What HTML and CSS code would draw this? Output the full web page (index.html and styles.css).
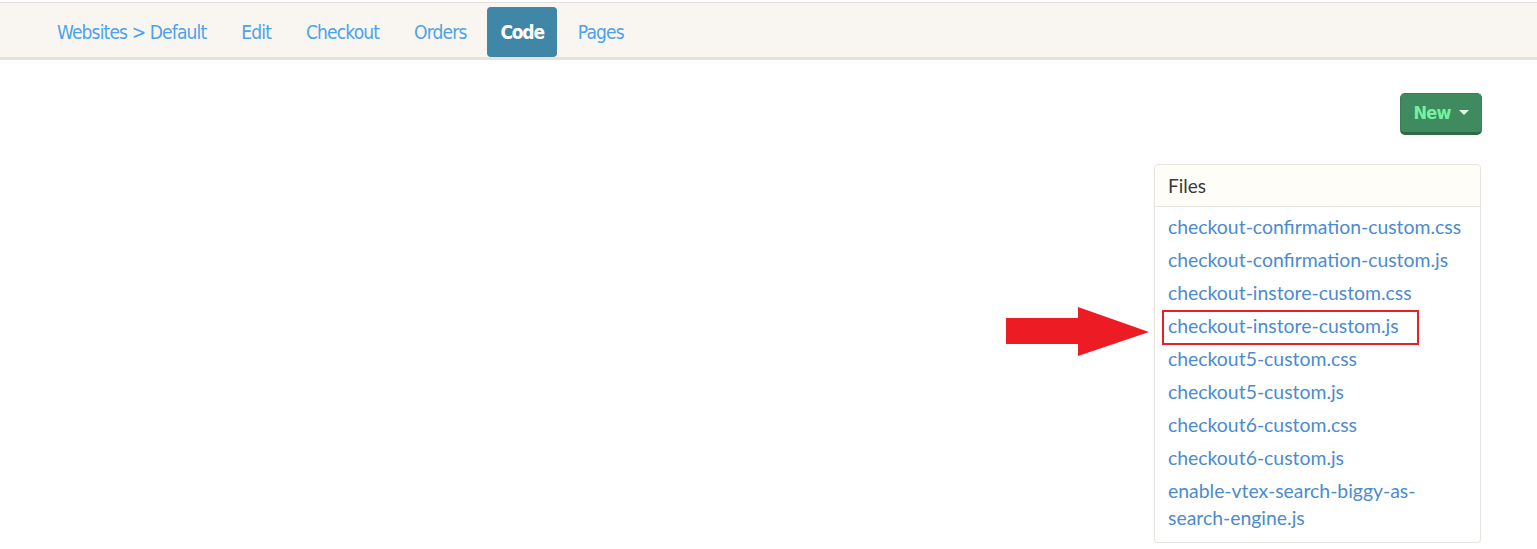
FILE: index.html
```html
<!DOCTYPE html>
<html>
<head>
<meta charset="utf-8">
<link rel="stylesheet" href="styles.css">
</head>
<body>
<nav class="navbar">
  <a class="nav-item" href="#">Websites &gt; Default</a>
  <a class="nav-item" href="#">Edit</a>
  <a class="nav-item" href="#">Checkout</a>
  <a class="nav-item" href="#">Orders</a>
  <a class="nav-item active" href="#">Code</a>
  <a class="nav-item" href="#">Pages</a>
</nav>
<main class="content">
  <div class="toolbar">
    <button class="btn-new">New <span class="caret"></span></button>
  </div>
  <div class="panel">
    <div class="panel-heading">Files</div>
    <ul class="file-list">
      <li><a href="#">checkout-confirmation-custom.css</a></li>
      <li><a href="#">checkout-confirmation-custom.js</a></li>
      <li><a href="#">checkout-instore-custom.css</a></li>
      <li class="highlighted">
        <svg class="arrow" width="144" height="50" viewBox="0 0 144 50"><polygon points="0,11 72,11 72,0 143,25 72,49 72,37 0,37" fill="#ed1c24"/></svg>
        <span class="mark"></span>
        <a href="#">checkout-instore-custom.js</a>
      </li>
      <li><a href="#">checkout5-custom.css</a></li>
      <li><a href="#">checkout5-custom.js</a></li>
      <li><a href="#">checkout6-custom.css</a></li>
      <li><a href="#">checkout6-custom.js</a></li>
      <li><a href="#">enable-vtex-search-biggy-as-search-engine.js</a></li>
    </ul>
  </div>
</main>
</body>
</html>
```

FILE: styles.css
```css
html, body {
  margin: 0;
  padding: 0;
  background: #ffffff;
}
body {
  font-family: Lato, "Open Sans", sans-serif;
}
.navbar {
  margin-top: 2px;
  height: 50px;
  border-top: 1px solid #e4e1dc;
  border-bottom: 3px solid #e6e3de;
  background: #f9f6f2;
  display: flex;
  align-items: flex-start;
  gap: 7px;
  padding: 4px 0 0 43px;
  box-sizing: content-box;
}
.nav-item {
  font-family: "Liberation Sans Narrow", "DejaVu Sans Condensed", sans-serif;
  font-stretch: condensed;
  font-size: 19px;
  letter-spacing: -0.85px;
  color: #4aa3ec;
  text-decoration: none;
  height: 50px;
  line-height: 50px;
  padding: 0 14px;
  border-radius: 4px;
}
.nav-item.active {
  background: #3f86a7;
  color: #ffffff;
  font-weight: bold;
  letter-spacing: -1.2px;
  padding: 0 13px;
}
.content {
  padding: 33px 55px 0 0;
  display: flex;
  flex-direction: column;
  align-items: flex-end;
}
.toolbar {
  display: flex;
  justify-content: flex-end;
}
.btn-new {
  font-family: "Liberation Sans Narrow", "DejaVu Sans Condensed", sans-serif;
  font-stretch: condensed;
  font-weight: bold;
  font-size: 18px;
  letter-spacing: -0.8px;
  color: #74f2a3;
  background: #3f8a5f;
  border: 1px solid #3a7e57;
  border-bottom: 3px solid #2f6a48;
  border-radius: 5px;
  width: 82px;
  height: 42px;
  padding: 0 0 2px 0;
  display: flex;
  align-items: center;
  justify-content: center;
  gap: 8px;
}
.caret {
  width: 0;
  height: 0;
  border-left: 5px solid transparent;
  border-right: 5px solid transparent;
  border-top: 5px solid #dff7e8;
}
.panel {
  margin-top: 29px;
  width: 325px;
  border: 1px solid #e6e4de;
  border-radius: 4px;
  box-shadow: 0 1px 2px rgba(0,0,0,0.06);
  margin-right: 1px;
}
.panel-heading {
  background: #fffdf7;
  border-bottom: 1px solid #e6e4de;
  border-radius: 4px 4px 0 0;
  height: 41px;
  line-height: 41px;
  padding: 0 13px;
  font-size: 19px;
  color: #3a3a3a;
}
.file-list {
  list-style: none;
  margin: 0;
  padding: 3px 13px 8px 13px;
}
.file-list li {
  position: relative;
  padding: 3px 0;
  line-height: 27px;
  font-size: 19.4px;
}
.file-list a {
  color: #4b8bcf;
  text-decoration: none;
}
.mark {
  position: absolute;
  left: -6px;
  top: 1px;
  width: 253px;
  height: 31px;
  border: 2px solid #e8202a;
}
.arrow {
  position: absolute;
  left: -162px;
  top: -2px;
}
```
